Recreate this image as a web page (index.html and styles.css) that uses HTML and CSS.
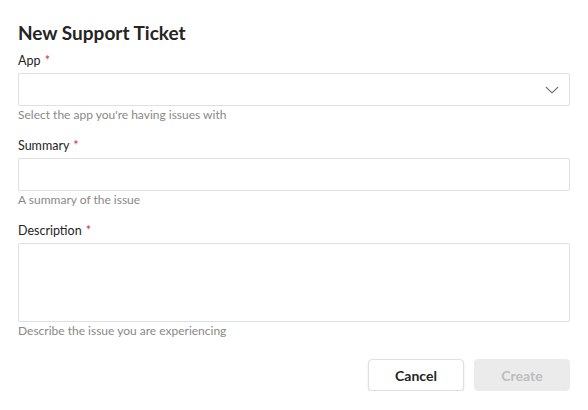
FILE: index.html
```html
<!DOCTYPE html>
<html>
<head>
<meta charset="utf-8">
<link rel="stylesheet" href="styles.css">
</head>
<body>
<div class="dialog">
  <h1 class="title">New Support Ticket</h1>
  <div class="fields">
    <div class="field">
      <label class="label">App <span class="req">*</span></label>
      <div class="box select">
        <svg class="chev" width="14" height="8" viewBox="0 0 14 8"><path d="M1 1.2 L7 6.8 L13 1.2" fill="none" stroke="#616161" stroke-width="1.1"/></svg>
      </div>
      <div class="help">Select the app you're having issues with</div>
    </div>
    <div class="field">
      <label class="label">Summary <span class="req">*</span></label>
      <div class="box"></div>
      <div class="help">A summary of the issue</div>
    </div>
    <div class="field">
      <label class="label">Description <span class="req">*</span></label>
      <div class="box area"></div>
      <div class="help">Describe the issue you are experiencing</div>
    </div>
  </div>
  <div class="actions">
    <button class="btn cancel">Cancel</button>
    <button class="btn create" disabled>Create</button>
  </div>
</div>
</body>
</html>
```
FILE: styles.css
```css
html, body {
  margin: 0;
  background: #ffffff;
}
body {
  font-family: "Lato", "Open Sans", sans-serif;
  color: #242424;
}
.dialog {
  padding: 20px 18px 0 18px;
}
.title {
  margin: 0;
  font-size: 19px;
  line-height: 25px;
  font-weight: 700;
  color: #242424;
}
.fields {
  margin-top: 8px;
  display: flex;
  flex-direction: column;
  gap: 15px;
}
.field {
  display: flex;
  flex-direction: column;
}
.label {
  font-size: 12.5px;
  line-height: 16px;
  margin-bottom: 4px;
  color: #242424;
}
.req {
  color: #c4314b;
  margin-left: 1px;
}
.box {
  height: 33px;
  border: 1px solid #e0e0e0;
  border-radius: 2px;
  box-sizing: border-box;
  background: #fff;
}
.select {
  display: flex;
  align-items: center;
  justify-content: flex-end;
  padding-right: 10px;
}
.chev {
  display: block;
}
.area {
  height: 79px;
}
.help {
  font-size: 12px;
  line-height: 16px;
  color: #8a8886;
  margin-top: 1px;
}
.actions {
  margin-top: 20px;
  display: flex;
  justify-content: flex-end;
  gap: 10px;
}
.btn {
  width: 96px;
  height: 32px;
  border-radius: 4px;
  font-family: "Lato", "Open Sans", sans-serif;
  font-size: 14px;
  font-weight: 700;
  padding: 0;
}
.cancel {
  background: #fff;
  border: 1px solid #e0e0e0;
  color: #242424;
  box-shadow: 0 1px 2px rgba(0,0,0,0.12);
}
.create {
  background: #ebebeb;
  border: 1px solid #ebebeb;
  color: #bdbdbd;
}
```
